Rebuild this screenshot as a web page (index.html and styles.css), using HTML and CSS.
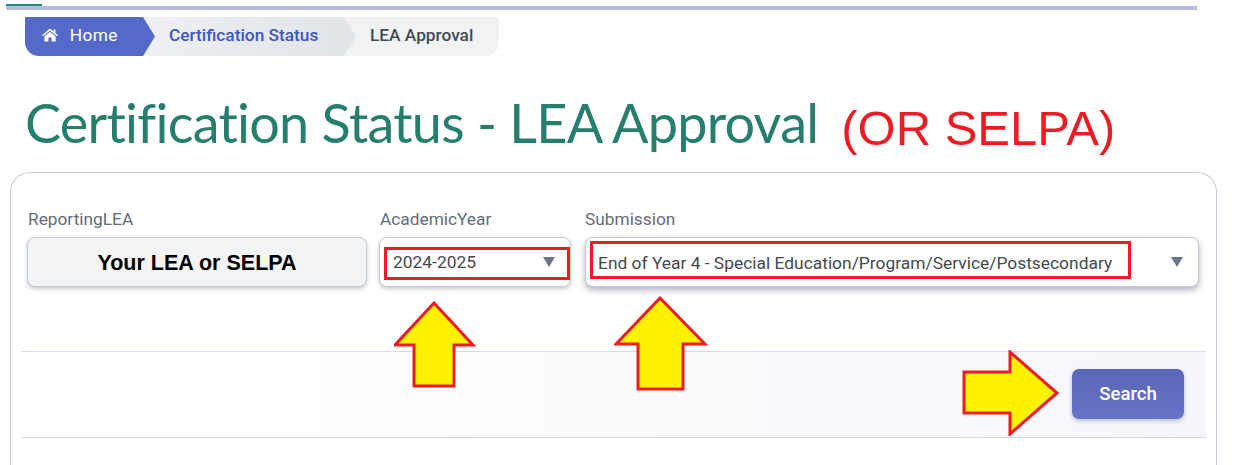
FILE: index.html
```html
<!DOCTYPE html>
<html lang="en">
<head>
    <meta charset="UTF-8">
    <meta name="viewport" content="width=device-width, initial-scale=1.0">
    <title>Certification Status - LEA Approval</title>
    <link rel="stylesheet" href="styles.css">
</head>
<body>
    <div class="progress">
        <div class="progress-green"></div>
        <div class="progress-bar"></div>
    </div>

    <nav class="crumbs">
        <a class="crumb crumb-home" href="#">
            <svg class="home-icon" viewBox="0 0 16 14" width="16" height="14">
                <path fill="#fff" d="M8 0.4 L11.6 3.5 V1.6 H13.4 V5 L16 7.2 L15 8.3 L8 2.4 L1 8.3 L0 7.2 Z"/>
                <path fill="#fff" d="M8 3.7 L13.6 8.4 V13.6 H9.6 V9.6 H6.4 V13.6 H2.4 V8.4 Z"/>
            </svg>
            Home
        </a>
        <a class="crumb crumb-link" href="#">Certification Status</a>
        <span class="crumb crumb-current">LEA Approval</span>
    </nav>

    <div class="heading">
        <h1>Certification Status - LEA Approval</h1>
        <span class="heading-note">(OR SELPA)</span>
    </div>

    <div class="card">
        <div class="fields">
            <div class="field field-lea">
                <label>ReportingLEA</label>
                <div class="box box-lea">Your LEA or SELPA</div>
            </div>
            <div class="field field-year">
                <label>AcademicYear</label>
                <div class="box box-select">
                    <span class="value">2024-2025</span>
                    <span class="caret"></span>
                    <div class="redbox redbox-year"></div>
                </div>
            </div>
            <div class="field field-sub">
                <label>Submission</label>
                <div class="box box-select">
                    <span class="value">End of Year 4 - Special Education/Program/Service/Postsecondary</span>
                    <span class="caret"></span>
                    <div class="redbox redbox-sub"></div>
                </div>
            </div>
        </div>
        <div class="actions">
            <button type="button" class="search">Search</button>
        </div>
    </div>

    <!-- yellow annotation arrows pasted over the screenshot -->
    <svg class="arrow arrow-year" width="82" height="88" viewBox="0 0 82 88">
        <polygon points="40,2 79,44 60,44 60,85 20,85 20,44 1,44" />
    </svg>
    <svg class="arrow arrow-sub" width="94" height="96" viewBox="0 0 94 96">
        <polygon points="46,2 91,48 69,48 69,93 24,93 24,48 2,48" />
    </svg>
    <svg class="arrow arrow-search" width="98" height="86" viewBox="0 0 98 86">
        <polygon points="2,22 48,22 48,2 95,43 48,84 48,63 2,63" />
    </svg>
</body>
</html>
```

FILE: styles.css
```css
body {
    margin: 0;
    height: 465px;
    overflow: hidden;
    position: relative;
    background: #fff;
    font-family: Roboto, Arial, sans-serif;
}
.progress {
    margin: 0 42px 0 6px;
    padding-top: 4px;
}
.progress-green {
    width: 36px;
    height: 2px;
    background: #1f8f7a;
}
.progress-bar {
    height: 4px;
    background: #b6bde0;
}
.crumbs {
    display: flex;
    width: 474px;
    height: 39px;
    margin: 7px 0 0 25px;
    border-radius: 0 0 14px 14px;
    overflow: hidden;
    background: #f1f2f4;
    font-size: 17.3px;
    font-weight: 500;
    line-height: 37px;
}
.crumb {
    display: block;
    text-decoration: none;
    white-space: nowrap;
}
.crumb-home {
    position: relative;
    z-index: 2;
    width: 130px;
    padding-left: 17px;
    box-sizing: border-box;
    background: #5569c9;
    color: #fff;
    font-weight: 400;
    letter-spacing: 0.4px;
    clip-path: polygon(0 0, 118px 0, 100% 50%, 118px 100%, 0 100%);
}
.home-icon {
    margin-right: 7px;
    vertical-align: -1px;
}
.crumb-link {
    position: relative;
    z-index: 1;
    width: 213px;
    margin-left: -12px;
    padding-left: 26px;
    box-sizing: border-box;
    background: linear-gradient(90deg, #eef0f3, #e0e3e8);
    color: #3c55c9;
    clip-path: polygon(0 0, 201px 0, 100% 50%, 201px 100%, 0 100%);
}
.crumb-current {
    margin-left: -12px;
    padding-left: 26px;
    color: #434a54;
}
.heading {
    margin: 29px 0 0 25px;
    height: 87px;
    white-space: nowrap;
}
h1 {
    display: inline-block;
    margin: 0;
    font-family: Lato, sans-serif;
    font-size: 54px;
    font-weight: 400;
    letter-spacing: -0.75px;
    line-height: 76px;
    color: #267f6c;
}
.heading-note {
    margin-left: 19px;
    font-family: "Liberation Sans", Arial, sans-serif;
    font-size: 49px;
    color: #ed1c24;
    vertical-align: -2px;
}
.card {
    margin: 0 22px 0 10px;
    height: 293px;
    box-sizing: border-box;
    border: 1px solid #c8ccd8;
    border-bottom: none;
    border-radius: 20px 20px 0 0;
    padding: 37px 10px 0;
}
.fields {
    display: flex;
    height: 141px;
    padding: 0 7px 0 6px;
}
.field-lea {
    width: 340px;
}
.field-year {
    width: 192px;
    margin-left: 12px;
}
.field-sub {
    width: 614px;
    margin-left: 14px;
}
label {
    display: block;
    height: 27px;
    padding-left: 1px;
    font-size: 17.3px;
    line-height: 18px;
    color: #626c7c;
}
.field-sub label {
    padding-left: 0;
}
.box {
    position: relative;
    height: 50px;
    box-sizing: border-box;
    border: 1px solid #c5cad4;
    border-radius: 8px;
    box-shadow: 0 2px 4px rgba(70, 80, 100, 0.3);
}
.box-lea {
    background: #f3f4f6;
    text-align: center;
    font-family: "Liberation Sans", Arial, sans-serif;
    font-size: 21.5px;
    font-weight: bold;
    line-height: 51px;
    color: #000;
}
.box-select {
    display: flex;
    align-items: center;
    justify-content: space-between;
    padding: 0 15px 0 13px;
    background: #fff;
    font-size: 17.4px;
    color: #45494f;
}
.field-sub .box-select {
    padding: 2px 15px 0 12px;
    box-shadow: 0 3px 6px rgba(70, 80, 100, 0.45);
}
.field-sub .caret {
    margin-top: -3px;
}
.caret {
    width: 0;
    height: 0;
    border-left: 6px solid transparent;
    border-right: 6px solid transparent;
    border-top: 10px solid #6b7788;
}
.redbox {
    position: absolute;
    border: 3px solid #ed1c24;
    box-sizing: border-box;
}
.redbox-year {
    left: 4px;
    top: 9px;
    width: 186px;
    height: 33px;
}
.redbox-sub {
    left: 4px;
    top: 3px;
    width: 541px;
    height: 38px;
}
.actions {
    display: flex;
    justify-content: flex-end;
    align-items: center;
    height: 87px;
    box-sizing: border-box;
    padding: 0 22px 1px 0;
    border-top: 1px solid #d8d8e6;
    border-bottom: 1px solid #d8d8e6;
    background: linear-gradient(90deg, #fff 20%, #f6f6fc 100%);
}
.search {
    width: 112px;
    height: 50px;
    border: none;
    border-radius: 7px;
    background: linear-gradient(180deg, #5a66b8, #6674c6);
    box-shadow: 0 2px 4px rgba(70, 80, 130, 0.35);
    color: #fff;
    font-family: Roboto, Arial, sans-serif;
    font-size: 18.5px;
    font-weight: 500;
}
.arrow {
    position: absolute;
}
.arrow polygon {
    fill: #fff200;
    stroke: #ed1c24;
    stroke-width: 3;
}
.arrow-year {
    left: 394px;
    top: 301px;
}
.arrow-sub {
    left: 614px;
    top: 296px;
}
.arrow-search {
    left: 962px;
    top: 350px;
}
```
